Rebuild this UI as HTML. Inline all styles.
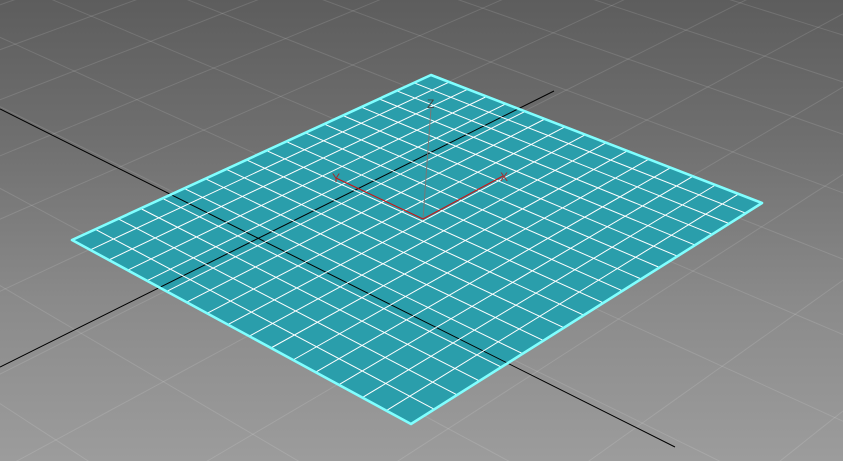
<!DOCTYPE html>
<html><head><meta charset="utf-8"><style>
html,body{margin:0;padding:0;width:843px;height:461px;overflow:hidden}
body{background:linear-gradient(#5d5d5d,#6f6f6f 30%,#8a8a8a 65%,#9c9c9c)}
svg{display:block;position:absolute;left:0;top:0}
text{font-family:"Liberation Sans",sans-serif;font-size:12px}
</style></head><body>
<svg id="s" width="843" height="461" xmlns="http://www.w3.org/2000/svg">
<g id="bg" stroke="rgba(255,255,255,0.12)" stroke-width="1" fill="none"></g>
<polygon points="431,75 762,203 411,424 72,240" fill="#2a9eab"/>
<g stroke="#000" stroke-width="1"><line x1="0" y1="109" x2="675" y2="447"/><line x1="0" y1="367" x2="554" y2="91"/></g>
<g id="pg" stroke="#fff" stroke-width="1" fill="none"></g>
<polygon points="431,75 762,203 411,424 72,240" fill="none" stroke="#80ffff" stroke-width="2.6" stroke-linejoin="round"/>
<g stroke-width="1" fill="none">
<line x1="423" y1="219" x2="431" y2="108" stroke="#777"/>
<line x1="423" y1="219" x2="336" y2="178" stroke="#d01010"/>
<line x1="423" y1="219" x2="503" y2="176" stroke="#d01010"/>
</g>
<text x="427" y="108" fill="#444">Z</text>
<text x="332" y="182" fill="#a03030">Y</text>
<text x="500" y="181" fill="#a03030">X</text>
</svg>
<script>
var P=[[431,75],[762,203],[411,424],[72,240]];
var x0=P[0][0],y0=P[0][1],x1=P[1][0],y1=P[1][1],x2=P[2][0],y2=P[2][1],x3=P[3][0],y3=P[3][1];
var sx=x0-x1+x2-x3,sy=y0-y1+y2-y3,dx1=x1-x2,dx2=x3-x2,dy1=y1-y2,dy2=y3-y2;
var den=dx1*dy2-dx2*dy1,g=(sx*dy2-dx2*sy)/den,h=(dx1*sy-sx*dy1)/den;
var a=x1-x0+g*x1,b=x3-x0+h*x3,c=x0,d=y1-y0+g*y1,e=y3-y0+h*y3,f=y0;
function m(u,v){var w=g*u+h*v+1;return [(a*u+b*v+c)/w,(d*u+e*v+f)/w,w];}
var NS="http://www.w3.org/2000/svg";
function L(grp,p,q){var l=document.createElementNS(NS,"line");l.setAttribute("x1",p[0].toFixed(1));l.setAttribute("y1",p[1].toFixed(1));l.setAttribute("x2",q[0].toFixed(1));l.setAttribute("y2",q[1].toFixed(1));grp.appendChild(l);}
var pg=document.getElementById("pg");
for(var i=1;i<16;i++){L(pg,m(i/16,0),m(i/16,1));}
for(var j=1;j<18;j++){L(pg,m(0,j/18),m(1,j/18));}
var bg=document.getElementById("bg");
function seg(fn){var pts=[];for(var t=-4;t<=5;t+=0.05){var p=fn(t);if(p[2]>0.12)pts.push(p);}
 for(var k=0;k<pts.length-1;k++)L(bg,pts[k],pts[k+1]);}
var st=4/16,st2=4/18;
for(var k=-16;k<=20;k++){var u=k*st+0.06;seg(function(t){return m(u,t);});}
for(var k=-16;k<=20;k++){var v=k*st2+0.08;seg(function(t){return m(t,v);});}
</script>
</body></html>
